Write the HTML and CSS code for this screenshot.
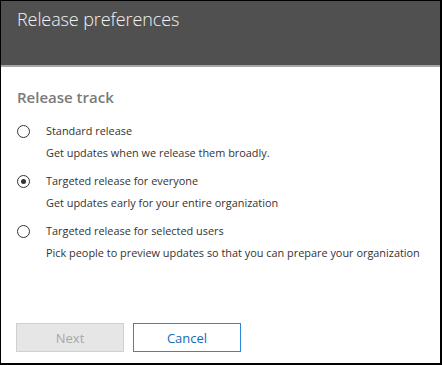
FILE: index.html
```html
<!DOCTYPE html>
<html lang="en">
<head>
  <meta charset="UTF-8" />
  <title>Release preferences</title>
  <link rel="stylesheet" href="styles.css">
</head>
<body>
  <div class="panel">
    <div class="panel-header">
      <h1 class="panel-title">Release preferences</h1>
    </div>

    <div class="panel-body">
      <h2 class="section-title">Release track</h2>

      <div class="options">
        <label class="option">
          <span class="radio"></span>
          <span class="option-text">
            <span class="option-name">Standard release</span>
            <span class="option-desc">Get updates when we release them broadly.</span>
          </span>
        </label>
        <label class="option">
          <span class="radio checked"></span>
          <span class="option-text">
            <span class="option-name">Targeted release for everyone</span>
            <span class="option-desc">Get updates early for your entire organization</span>
          </span>
        </label>
        <label class="option">
          <span class="radio"></span>
          <span class="option-text">
            <span class="option-name">Targeted release for selected users</span>
            <span class="option-desc">Pick people to preview updates so that you can prepare your organization</span>
          </span>
        </label>
      </div>
    </div>

    <div class="panel-footer">
      <button class="btn btn-disabled" disabled>Next</button>
      <button class="btn btn-outline">Cancel</button>
    </div>
  </div>
</body>
</html>
```

FILE: styles.css
```css
body {
  margin: 0;
  font-family: 'Open Sans', 'Noto Sans', sans-serif;
  background: #fff;
}

.panel {
  width: 439px;
  height: 362px;
  border: 1px solid #000;
  border-right-width: 2px;
  border-bottom-width: 2px;
  display: flex;
  flex-direction: column;
  background: #fff;
}

.panel-header {
  background: #505050;
  height: 64px;
  border-bottom: 2px solid #a6a6a6;
  padding: 0 16px;
}

.panel-title {
  margin: 0;
  padding-top: 6px;
  font-size: 18px;
  font-weight: 300;
  color: #f2f2f2;
  letter-spacing: -0.1px;
}

.panel-body {
  flex: 1;
  padding: 0 16px;
}

.section-title {
  margin: 20px 0 0;
  font-size: 15px;
  font-weight: 600;
  color: #7a7a7a;
}

.options {
  display: flex;
  flex-direction: column;
  gap: 12px;
  margin-top: 16px;
}

.option {
  display: flex;
  align-items: flex-start;
  gap: 16px;
  font-size: 10.9px;
  color: #333;
}

.radio {
  width: 11px;
  height: 11px;
  border: 1px solid #333;
  border-radius: 50%;
  margin-top: 2px;
  position: relative;
  flex-shrink: 0;
}

.radio.checked::after {
  content: '';
  position: absolute;
  left: 3px;
  top: 3px;
  width: 5px;
  height: 5px;
  border-radius: 50%;
  background: #333;
}

.option-text {
  display: flex;
  flex-direction: column;
  gap: 6px;
  line-height: 16px;
}

.panel-footer {
  display: flex;
  gap: 9px;
  padding: 0 15px 11px;
}

.btn {
  width: 108px;
  height: 29px;
  font-family: inherit;
  font-size: 13px;
  background: #fff;
}

.btn-disabled {
  background: #e6e6e6;
  border: 1px solid #d0d0d0;
  color: #a6a6a6;
}

.btn-outline {
  border: 1px solid #2b88d8;
  color: #0f6cbd;
}
```
